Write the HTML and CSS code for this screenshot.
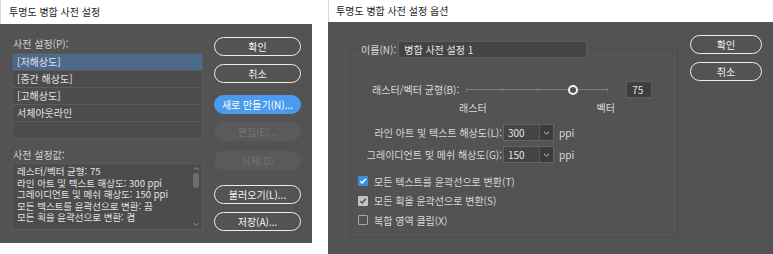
FILE: index.html
```html
<!DOCTYPE html>
<html lang="ko">
<head>
<meta charset="UTF-8">
<title>투명도 병합 사전 설정</title>
<link rel="stylesheet" href="styles.css">
</head>
<body>

<div class="dialog dialog-presets">
  <div class="titlebar">투명도 병합 사전 설정</div>
  <div class="presets-body">
    <div class="preset-col">
      <div class="field-label">사전 설정(P):</div>
      <ul class="preset-list">
        <li class="selected">[저해상도]</li>
        <li>[중간 해상도]</li>
        <li>[고해상도]</li>
        <li>서체아웃라인</li>
        <li></li>
      </ul>
      <div class="field-label values-label">사전 설정값:</div>
      <div class="values-box">
        <div class="values-text">
          <div>레스터/벡터 균형: 75</div>
          <div>라인 아트 및 텍스트 해상도: 300 ppi</div>
          <div>그레이디언트 및 메쉬 해상도: 150 ppi</div>
          <div>모든 텍스트를 윤곽선으로 변환: 끔</div>
          <div>모든 획을 윤곽선으로 변환: 켬</div>
        </div>
        <div class="scrollbar">
          <svg width="7" height="5" viewBox="0 0 7 5"><path d="M1 4 L3.5 1.5 L6 4" fill="none" stroke="#8a8a8a" stroke-width="1"/></svg>
          <div class="scroll-thumb"></div>
          <div class="scroll-fill"></div>
          <svg width="7" height="5" viewBox="0 0 7 5"><path d="M1 1 L3.5 3.5 L6 1" fill="none" stroke="#8a8a8a" stroke-width="1"/></svg>
        </div>
      </div>
    </div>
    <div class="button-col">
      <button class="btn">확인</button>
      <button class="btn">취소</button>
      <button class="btn btn-primary more-4">새로 만들기(N)...</button>
      <button class="btn btn-disabled">편집(E)...</button>
      <button class="btn btn-disabled more-2">삭제(D)</button>
      <button class="btn more-7">불러오기(L)...</button>
      <button class="btn">저장(A)...</button>
    </div>
  </div>
</div>

<div class="dialog dialog-options">
  <div class="titlebar">투명도 병합 사전 설정 옵션</div>
  <div class="options-body">
    <fieldset class="options-group">
      <legend class="name-row">
        <span>이름(N):</span>
        <span class="text-input name-input">병합 사전 설정 1</span>
      </legend>

      <div class="slider-row">
        <span>래스터/벡터 균형(B):</span>
        <div class="slider">
          <span class="tick"></span><span class="tick"></span><span class="tick"></span><span class="tick"></span><span class="tick"></span>
          <span class="knob"></span>
        </div>
        <span class="text-input number-input">75</span>
      </div>
      <div class="scale-row">
        <span>래스터</span>
        <span>벡터</span>
      </div>

      <div class="select-row first-select">
        <span class="select-label">라인 아트 및 텍스트 해상도(L):</span>
        <span class="select"><span class="select-value">300</span><span class="select-arrow"><svg width="7" height="4" viewBox="0 0 7 4"><path d="M1 0.8 L3.5 3 L6 0.8" fill="none" stroke="#c8c8c8" stroke-width="1"/></svg></span></span>
        <span class="unit">ppi</span>
      </div>
      <div class="select-row">
        <span class="select-label">그레이디언트 및 메쉬 해상도(G):</span>
        <span class="select"><span class="select-value">150</span><span class="select-arrow"><svg width="7" height="4" viewBox="0 0 7 4"><path d="M1 0.8 L3.5 3 L6 0.8" fill="none" stroke="#c8c8c8" stroke-width="1"/></svg></span></span>
        <span class="unit">ppi</span>
      </div>

      <div class="checks">
        <div class="check-row">
          <span class="checkbox checkbox-blue"><svg width="8" height="8" viewBox="0 0 8 8"><path d="M1.3 4.2 L3.2 6 L6.8 1.8" fill="none" stroke="#fff" stroke-width="1.4"/></svg></span>
          <span>모든 텍스트를 윤곽선으로 변환(T)</span>
        </div>
        <div class="check-row">
          <span class="checkbox checkbox-grey"><svg width="8" height="8" viewBox="0 0 8 8"><path d="M1.3 4.2 L3.2 6 L6.8 1.8" fill="none" stroke="#4a4a4a" stroke-width="1.4"/></svg></span>
          <span>모든 획을 윤곽선으로 변환(S)</span>
        </div>
        <div class="check-row">
          <span class="checkbox"></span>
          <span>복합 영역 클립(X)</span>
        </div>
      </div>
    </fieldset>

    <div class="button-col options-buttons">
      <button class="btn">확인</button>
      <button class="btn">취소</button>
    </div>
  </div>
</div>

</body>
</html>
```

FILE: styles.css
```css
* {
  box-sizing: border-box;
}

body {
  margin: 0;
  width: 773px;
  height: 254px;
  overflow: hidden;
  display: flex;
  gap: 16px;
  background-color: #fff;
  font-family: "Noto Sans CJK KR", "Noto Sans", sans-serif;
  font-size: 10px;
  color: #d8d8d8;
}

.dialog {
  display: flex;
  flex-direction: column;
  background-color: #535353;
}

.dialog-presets {
  width: 312px;
  height: 243px;
}

.dialog-options {
  flex: 1;
  height: 254px;
}

.titlebar {
  height: 24px;
  line-height: 24px;
  padding-left: 8px;
  background-color: #fff;
  color: #1e1e1e;
  border-left: 1px solid #d6d6d6;
}

.dialog-options .titlebar {
  height: 22px;
  line-height: 22px;
  padding-left: 7px;
}

/* Left dialog */
.presets-body {
  flex: 1;
  display: flex;
  gap: 11px;
  padding: 13px 0 0 12px;
}

.preset-col {
  width: 191px;
  display: flex;
  flex-direction: column;
}

.field-label {
  height: 14px;
  line-height: 14px;
  padding-left: 1px;
  color: #d4d4d4;
}

.preset-list {
  list-style: none;
  margin: 2px 0 0;
  padding: 0;
  background-color: #4c4c4c;
  border: 1px solid #5a5a5a;
}

.preset-list li {
  height: 17px;
  line-height: 16px;
  padding-left: 4px;
  border-bottom: 1px solid #5b5b5b;
  color: #e2e2e2;
}

.preset-list li:last-child {
  border-bottom: none;
  height: 16px;
}

.preset-list .selected {
  background-color: #4d6a8c;
}

.values-label {
  margin-top: 9px;
}

.values-box {
  margin-top: 1px;
  height: 67px;
  display: flex;
  background-color: #4c4c4c;
  border: 1px solid #5a5a5a;
}

.values-text {
  flex: 1;
  padding: 2px 4px;
  font-size: 9.5px;
  line-height: 11.5px;
  color: #e2e2e2;
  white-space: nowrap;
}

.scrollbar {
  width: 10px;
  margin: 2px 1px 2px 0;
  display: flex;
  flex-direction: column;
  align-items: center;
  gap: 2px;
}

.scroll-thumb {
  width: 6px;
  height: 15px;
  border-radius: 3px;
  background-color: #6e6e6e;
}

.scroll-fill {
  flex: 1;
}

.button-col {
  width: 87px;
  display: flex;
  flex-direction: column;
  gap: 8px;
}

.btn {
  display: block;
  width: 100%;
  height: 19px;
  padding: 0;
  border: 1.5px solid #ececec;
  border-radius: 10px;
  background: transparent;
  color: #f4f4f4;
  font: inherit;
  line-height: 15px;
  text-align: center;
}

.btn-primary {
  border-color: #4a9bee;
  background-color: #4a9bee;
  color: #fff;
}

.btn-disabled {
  border-color: #5a5a5a;
  background-color: #5a5a5a;
  color: #737373;
}

.more-2 { margin-top: 2px; }
.more-4 { margin-top: 4px; }
.more-7 { margin-top: 7px; }

/* Right dialog */
.options-body {
  flex: 1;
  display: flex;
  padding-left: 22px;
}

.options-group {
  width: 328px;
  height: 197px;
  margin: 19px 0 0;
  padding: 0;
  border: 1px solid #4a4a4a;
  min-inline-size: 0;
}

.name-row {
  display: flex;
  align-items: center;
  gap: 2px;
  height: 17px;
  margin-left: 7px;
  padding: 0 2px 0 3px;
}

.text-input {
  display: block;
  height: 17px;
  line-height: 15px;
  padding-left: 5px;
  background-color: #444;
  border: 1px solid #5e5e5e;
  color: #e6e6e6;
}

.name-input {
  width: 189px;
}

.slider-row {
  display: flex;
  align-items: center;
  height: 17px;
  margin-top: 23px;
  padding-left: 21px;
}

.slider {
  position: relative;
  width: 142px;
  height: 9px;
  margin-left: 7px;
  display: flex;
  justify-content: space-between;
  align-items: center;
  background: linear-gradient(#7d7d7d, #7d7d7d) center / 100% 1px no-repeat;
}

.tick {
  width: 1px;
  height: 5px;
  background-color: #6f6f6f;
}

.knob {
  position: absolute;
  left: 102px;
  top: 0;
  width: 10px;
  height: 10px;
  border: 2px solid #f2f2f2;
  border-radius: 50%;
  background-color: #535353;
}

.number-input {
  width: 26px;
  margin-left: 18px;
  background-color: #3e3e3e;
}

.scale-row {
  display: flex;
  justify-content: space-between;
  width: 156px;
  height: 16px;
  line-height: 16px;
  margin: 2px 0 0 108px;
}

.select-row {
  display: flex;
  align-items: center;
  height: 17px;
  margin-top: 5px;
}

.first-select {
  margin-top: 8px;
}

.select-label {
  width: 151px;
  text-align: right;
}

.select {
  display: flex;
  width: 51px;
  height: 17px;
  margin-left: 1px;
  border: 1px solid #646464;
  background-color: #444;
}

.select-value {
  flex: 1;
  padding-left: 4px;
  line-height: 15px;
  color: #e6e6e6;
}

.select-arrow {
  width: 14px;
  display: flex;
  align-items: center;
  justify-content: center;
  border-left: 1px solid #5a5a5a;
  background-color: #3c3c3c;
}

.unit {
  margin-left: 5px;
}

.checks {
  display: flex;
  flex-direction: column;
  gap: 3.5px;
  margin-top: 10px;
  padding-left: 7px;
}

.check-row {
  display: flex;
  align-items: center;
  gap: 6px;
  height: 16px;
}

.checkbox {
  width: 10px;
  height: 10px;
  display: flex;
  align-items: center;
  justify-content: center;
  border: 1px solid #a8a8a8;
  border-radius: 1px;
}

.checkbox-blue {
  border-color: #3d8ee0;
  background-color: #3d8ee0;
}

.checkbox-grey {
  border-color: #c4c4c4;
  background-color: #c4c4c4;
}

.options-buttons {
  width: 72px;
  margin-left: 12px;
  padding-top: 13px;
}
```
